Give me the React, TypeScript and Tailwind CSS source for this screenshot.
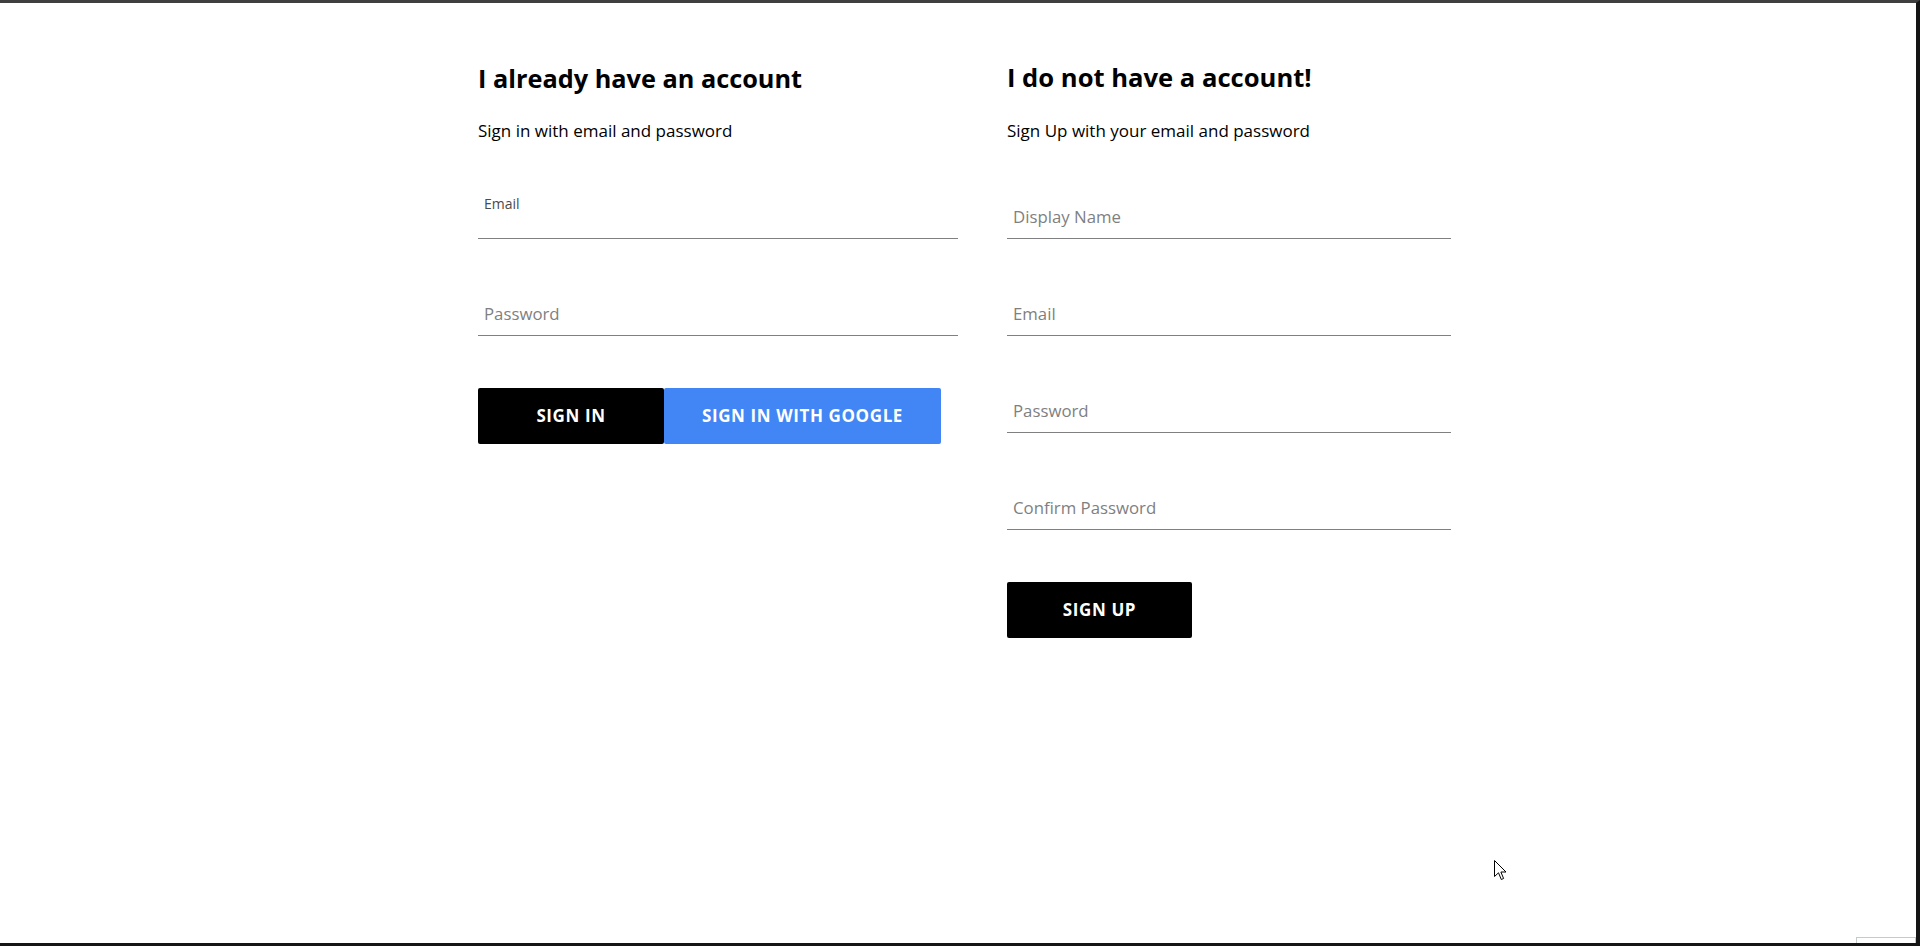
import React from "react";

const body = { fontFamily: '"Open Sans", "Noto Sans", sans-serif' };

function Field({ label, shrunk = false, first = false }: { label: string; shrunk?: boolean; first?: boolean }) {
  const h = first ? "h-[96px]" : "h-[97px]";
  if (shrunk) {
    return (
      <div className={"flex items-end border-b border-[#808080] pb-[25px] pl-[6px] " + h}>
        <span className="text-[14px] leading-[18px] text-[#4a4a4a]">{label}</span>
      </div>
    );
  }
  return (
    <div className={"flex items-end border-b border-[#808080] pb-[11px] pl-[6px] " + h}>
      <span className="text-[16.8px] leading-[20px] text-[#7f7f7f]">{label}</span>
    </div>
  );
}

function Btn({ children, className }: { children: React.ReactNode; className: string }) {
  return (
    <button
      className={
        "flex h-[56px] items-center justify-center rounded-[2px] text-[17px] font-bold uppercase tracking-[0.6px] text-white " +
        className
      }
    >
      {children}
    </button>
  );
}

function Cursor() {
  return (
    <svg className="absolute left-[1494px] top-[857px]" width="13" height="21" viewBox="0 0 13 21">
      <path
        d="M0.5 0.5 L0.5 16.5 L4.5 12.8 L7.3 19.5 L9.6 18.5 L6.9 12 L12 12 Z"
        fill="white"
        stroke="black"
        strokeWidth="1"
        strokeLinejoin="miter"
      />
    </svg>
  );
}

export default function App() {
  return (
    <div
      className="relative h-[946px] w-full overflow-hidden border-t-[3px] border-r-4 border-b-[3px] border-t-[#3f3f3f] border-r-[#151515] border-b-[#151515] bg-white text-black"
      style={body}
    >
      <div className="flex justify-center pl-[13px] pt-[57px]">
        <div className="flex w-[973px] gap-[49px]">
          <div className="flex w-[480px] flex-col">
            <h2 className="text-[25.3px] font-bold leading-[36px]">I already have an account</h2>
            <p className="mt-[23px] text-[17px] leading-[24px]">Sign in with email and password</p>
            <Field label="Email" shrunk first />
            <Field label="Password" />
            <div className="mt-[52px] flex">
              <Btn className="w-[186px] bg-black">Sign in</Btn>
              <Btn className="w-[277px] bg-[#4285f4]">Sign in with Google</Btn>
            </div>
          </div>
          <div className="flex w-[444px] flex-col">
            <h2 className="text-[25.6px] font-bold leading-[36px]">I do not have a account!</h2>
            <p className="mt-[23px] text-[17px] leading-[24px]">Sign Up with your email and password</p>
            <Field label="Display Name" first />
            <Field label="Email" />
            <Field label="Password" />
            <Field label="Confirm Password" />
            <div className="mt-[52px] flex">
              <Btn className="w-[185px] bg-black">Sign up</Btn>
            </div>
          </div>
        </div>
      </div>
      <Cursor />
      <div className="absolute bottom-0 right-0 h-[6px] w-[60px] border-x border-t border-[#c4ccc8] bg-white" />
    </div>
  );
}
